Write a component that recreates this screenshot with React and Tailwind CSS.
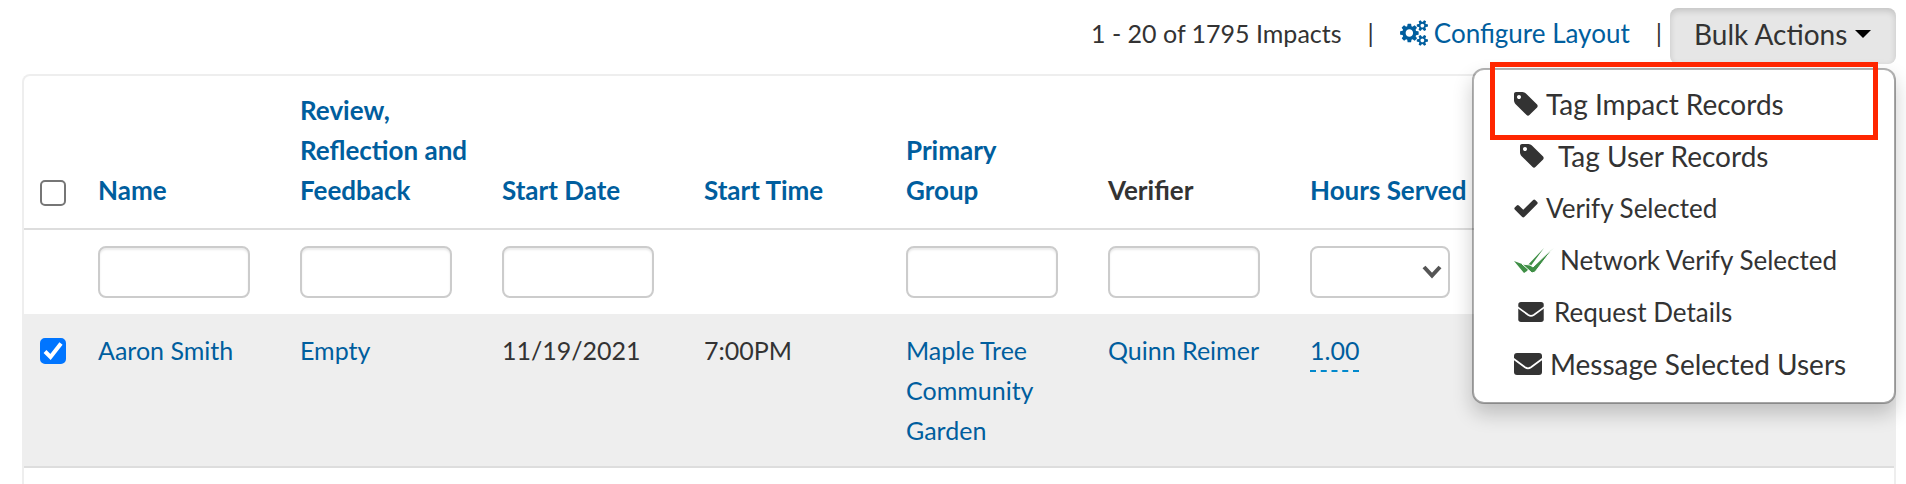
import { useState } from 'react'

const columns = [
  { key: 'name', label: 'Name', filter: 'text' },
  { key: 'review', label: 'Review,\nReflection and\nFeedback', filter: 'text' },
  { key: 'startDate', label: 'Start Date', filter: 'text' },
  { key: 'startTime', label: 'Start Time' },
  { key: 'group', label: 'Primary\nGroup', filter: 'text' },
  { key: 'verifier', label: 'Verifier', filter: 'text', plain: true },
  { key: 'hours', label: 'Hours Served', filter: 'select' },
]

const actions = [
  { label: 'Tag Impact Records', icon: <TagIcon />, style: 'pl-10 gap-2 text-[28px]' },
  { label: 'Tag User Records', icon: <TagIcon />, style: 'pl-[46px] gap-3.5 text-[28px]' },
  { label: 'Verify Selected', icon: <CheckIcon />, style: 'pl-10 gap-2 text-[26px]' },
  { label: 'Network Verify Selected', icon: <DoubleCheckIcon />, style: 'pl-10 gap-1.5 text-[26px]' },
  { label: 'Request Details', icon: <EnvelopeIcon className="w-[26px] h-5" />, style: 'pl-11 gap-2.5 text-[26px]' },
  { label: 'Message Selected Users', icon: <EnvelopeIcon className="w-7 h-[22px]" />, style: 'pl-10 gap-2 text-[28px]' },
]

export default function App() {
  const [allSelected, setAllSelected] = useState(false)
  const [selected, setSelected] = useState(true)
  const [menuOpen, setMenuOpen] = useState(true)

  return (
    <main className="bg-white pl-[22px] pr-[10px] pt-2 font-['Lato','Liberation_Sans',sans-serif] text-[25px] leading-10 text-[#333]">
      <div className="flex items-center justify-end mb-[10px]">
        <div className="flex items-center pb-1.5">
          <span>1 - 20 of 1795 Impacts</span>
          <span className="mx-[26px]">|</span>
          <a href="#layout" className="flex items-center gap-1.5 text-[26px] text-[#005e9e]">
            <CogsIcon />
            Configure Layout
          </a>
          <span className="ml-[26px] mr-2">|</span>
        </div>
        <div className="relative">
          <button
            type="button"
            aria-expanded={menuOpen}
            onClick={() => setMenuOpen(!menuOpen)}
            className="flex items-center gap-2 h-14 w-[226px] pl-6 pb-1 rounded-lg bg-[#e6e6e6] text-[28px] whitespace-nowrap shadow-[inset_0_3px_6px_rgba(0,0,0,0.15)]"
          >
            Bulk Actions
            <span className="border-x-8 border-x-transparent border-t-8 border-t-black" />
          </button>
          {menuOpen && (
            <div className="absolute right-0 top-full mt-1 z-10 w-[424px] pt-2 pb-3 bg-white border-2 border-black/30 bg-clip-padding rounded-xl shadow-[0_10px_20px_rgba(0,0,0,0.2)]">
              <ul>
                {actions.map((action) => (
                  <li key={action.label}>
                    <button type="button" className={`flex items-center w-full h-[52px] whitespace-nowrap ${action.style}`}>
                      {action.icon}
                      {action.label}
                    </button>
                  </li>
                ))}
              </ul>
              <div className="absolute left-4 right-4 -top-2 h-[78px] border-[5px] border-[#ff2600] pointer-events-none" />
            </div>
          )}
        </div>
      </div>

      <div className="border-2 border-b-0 border-[#eee] rounded-t-lg">
        <table className="w-full table-fixed text-left">
          <thead>
            <tr className="align-bottom border-b-2 border-[#ddd]">
              <th className="w-[58px] pl-4 pb-3.5">
                <Checkbox label="Select all" checked={allSelected} onChange={setAllSelected} />
              </th>
              {columns.map((col) => (
                <th key={col.key} className="w-[202px] pt-3.5 pb-[18px] px-4 font-bold text-[26px] leading-10 whitespace-pre-line">
                  {col.plain ? col.label : <a href={`#sort-${col.key}`} className="text-[#005e9e]">{col.label}</a>}
                </th>
              ))}
              <th />
            </tr>
          </thead>
          <tbody>
            <tr>
              <td />
              {columns.map((col) => (
                <td key={col.key} className="h-[85px] px-4 align-middle">
                  <Filter type={col.filter} label={col.label} />
                </td>
              ))}
              <td />
            </tr>
            <tr className="bg-[#eee] align-top border-b-2 border-[#ddd]">
              <td className="pl-4 pt-4">
                <Checkbox label="Select Aaron Smith" checked={selected} onChange={setSelected} />
              </td>
              <td className="p-4"><a href="#user" className="text-[#005e9e]">Aaron Smith</a></td>
              <td className="p-4"><a href="#feedback" className="text-[#005e9e]">Empty</a></td>
              <td className="p-4">11/19/2021</td>
              <td className="p-4">7:00PM</td>
              <td className="p-4"><a href="#group" className="text-[#005e9e]">Maple Tree Community Garden</a></td>
              <td className="p-4 whitespace-nowrap"><a href="#verifier" className="text-[#005e9e]">Quinn Reimer</a></td>
              <td className="p-4"><a href="#hours" className="inline-block text-[#005e9e] border-b-2 border-dashed border-[#0088cc]">1.00</a></td>
              <td />
            </tr>
            <tr>
              <td colSpan={9} className="h-[17px]" />
            </tr>
          </tbody>
        </table>
      </div>
    </main>
  )
}

function Checkbox({ label, checked, onChange }) {
  return (
    <span className="grid items-center w-[26px] h-[42px]">
      <input
        type="checkbox"
        aria-label={label}
        checked={checked}
        onChange={(e) => onChange(e.target.checked)}
        className="col-start-1 row-start-1 appearance-none size-[26px] rounded-[5px] border-2 border-[#767676] bg-white checked:border-[#0075ff] checked:bg-[#0075ff]"
      />
      {checked && (
        <svg className="col-start-1 row-start-1 size-[26px] pointer-events-none" viewBox="0 0 26 26" fill="none" stroke="#fff" strokeWidth="4">
          <path d="M5 13.5l5.5 5.5L21 5.5" />
        </svg>
      )}
    </span>
  )
}

function Filter({ type, label }) {
  if (type === 'text') {
    return (
      <input
        type="text"
        aria-label={`Filter by ${label}`}
        className="block w-[152px] h-[52px] px-3 bg-white border-2 border-[#ccc] rounded-lg shadow-[inset_0_2px_2px_rgba(0,0,0,0.08)]"
      />
    )
  }
  if (type === 'select') {
    return (
      <div className="grid items-center w-[140px]">
        <select aria-label={`Filter by ${label}`} className="col-start-1 row-start-1 appearance-none w-full h-[52px] px-3 bg-white border-2 border-[#ccc] rounded-lg">
          <option value=""></option>
          <option value="1">1.00</option>
        </select>
        <svg className="col-start-1 row-start-1 justify-self-end mr-2 w-5 h-4 pointer-events-none" viewBox="0 0 20 16" fill="none" stroke="#555" strokeWidth="4">
          <path d="M2 3l8 8.5L18 3" />
        </svg>
      </div>
    )
  }
  return null
}

function CogsIcon() {
  return (
    <svg className="w-7 h-[26px]" viewBox="0 0 1920 1792" fill="currentColor">
      <path d="M896 896q0-106-75-181t-181-75-181 75-75 181 75 181 181 75 181-75 75-181zm768 512q0-52-38-90t-90-38-90 38-38 90q0 53 37.5 90.5t90.5 37.5 90.5-37.5 37.5-90.5zm0-1024q0-52-38-90t-90-38-90 38-38 90q0 53 37.5 90.5t90.5 37.5 90.5-37.5 37.5-90.5zm-384 421v185q0 10-7 19.5t-16 10.5l-155 24q-11 35-32 76 34 48 90 115 7 11 7 20 0 12-7 19-23 30-82.5 89.5t-78.5 59.5q-11 0-21-7l-115-90q-37 19-77 31-11 108-23 155-7 24-30 24h-186q-11 0-20-7.5t-10-17.5l-23-153q-34-10-75-31l-118 89q-7 7-20 7-11 0-21-8-144-133-144-160 0-9 7-19 10-14 41-53t47-61q-23-44-35-82l-152-24q-10-1-17-9.5t-7-19.5v-185q0-10 7-19.5t16-10.5l155-24q11-35 32-76-34-48-90-115-7-11-7-20 0-12 7-20 22-30 82-89t79-59q11 0 21 7l115 90q34-18 77-32 11-108 23-154 7-24 30-24h186q11 0 20 7.5t10 17.5l23 153q34 10 75 31l118-89q8-7 20-7 11 0 21 8 144 133 144 160 0 8-7 19-12 16-42 54t-45 60q23 48 34 82l152 23q10 2 17 10.5t7 19.5zm640 533v140q0 16-149 31-12 27-30 52 51 113 51 138 0 4-4 7-122 71-124 71-8 0-46-47t-52-68q-20 2-30 2t-30-2q-14 21-52 68t-46 47q-2 0-124-71-4-3-4-7 0-25 51-138-18-25-30-52-149-15-149-31v-140q0-16 149-31 13-29 30-52-51-113-51-138 0-4 4-7 4-2 35-20t59-34 30-16q8 0 46 46.5t52 67.5q20-2 30-2t30 2q51-71 92-112l6-2q4 0 124 70 4 3 4 7 0 25-51 138 17 23 30 52 149 15 149 31zm0-1024v140q0 16-149 31-12 27-30 52 51 113 51 138 0 4-4 7-122 71-124 71-8 0-46-47t-52-68q-20 2-30 2t-30-2q-14 21-52 68t-46 47q-2 0-124-71-4-3-4-7 0-25 51-138-18-25-30-52-149-15-149-31v-140q0-16 149-31 13-29 30-52-51-113-51-138 0-4 4-7 4-2 35-20t59-34 30-16q8 0 46 46.5t52 67.5q20-2 30-2t30 2q51-71 92-112l6-2q4 0 124 70 4 3 4 7 0 25-51 138 17 23 30 52 149 15 149 31z" />
    </svg>
  )
}

function TagIcon() {
  return (
    <svg className="size-6" viewBox="128 128 1536 1536" fill="currentColor">
      <path d="M576 448q0-53-37.5-90.5t-90.5-37.5-90.5 37.5-37.5 90.5 37.5 90.5 90.5 37.5 90.5-37.5 37.5-90.5zm1067 576q0 53-37 90l-491 492q-39 37-91 37-53 0-90-37l-715-716q-38-37-64.5-101t-26.5-117v-416q0-52 38-90t90-38h416q53 0 117 26.5t102 64.5l715 714q37 39 37 91z" />
    </svg>
  )
}

function CheckIcon() {
  return (
    <svg className="size-6" viewBox="100 100 1592 1592" fill="currentColor">
      <path d="M1671 566q0 40-28 68l-724 724-136 136q-28 28-68 28t-68-28l-136-136-362-362q-28-28-28-68t28-68l136-136q28-28 68-28t68 28l294 295 656-657q28-28 68-28t68 28l136 136q28 28 28 68z" />
    </svg>
  )
}

function DoubleCheckIcon() {
  return (
    <svg className="w-10 h-[26px]" viewBox="0 0 40 26" fill="#3f8f46">
      <path d="M0 14l8 3 4 3L30 1 13 24 10 26z" />
      <path d="M8 17l8 1 3 2L40 0 21 25 18 26z" stroke="#fff" strokeWidth="1" />
    </svg>
  )
}

function EnvelopeIcon({ className }) {
  return (
    <svg className={className} viewBox="0 0 28 22">
      <rect width="28" height="22" rx="3" fill="currentColor" />
      <path d="M-1 5.500L11 14.300q3 2 6 0L29 5.500" fill="none" stroke="#fff" strokeWidth="1.8" />
    </svg>
  )
}
